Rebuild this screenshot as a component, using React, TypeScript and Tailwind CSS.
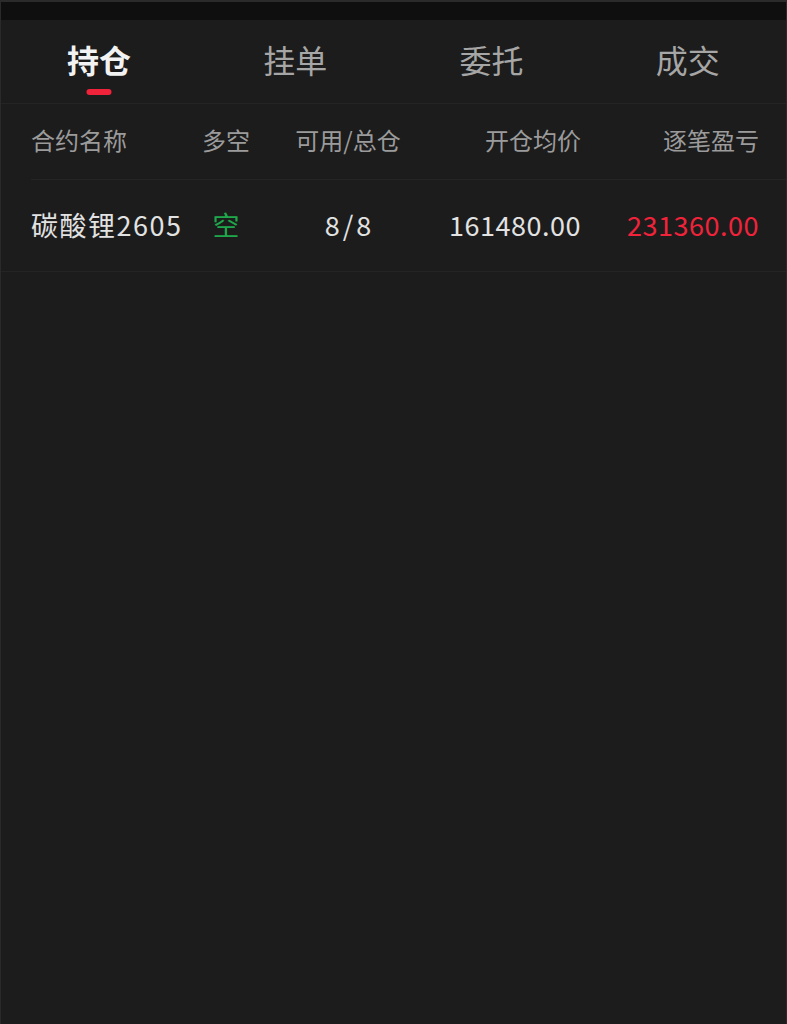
import React from "react";

const font = { fontFamily: '"Noto Sans CJK SC", "Noto Sans", sans-serif' };

export default function App() {
  const tabs = ["持仓", "挂单", "委托", "成交"];
  return (
    <div className="w-[787px] h-[1024px] bg-[#1c1c1c] flex flex-col border-x border-[#2a2a2a]" style={font}>
      <div className="h-[20px] bg-[#0f0f0f] border-t-2 border-[#2b2b2b]" />
      <div className="h-[84px] grid grid-cols-4 border-b border-[#242424]">
        {tabs.map((t, i) => (
          <div key={t} className="relative flex items-center justify-center">
            <span
              className={
                i === 0
                  ? "text-[32px] font-bold text-[#f2f2f2] leading-none -mt-[6px]"
                  : "text-[32px] text-[#a6a6a6] leading-none -mt-[6px]"
              }
            >
              {t}
            </span>
            {i === 0 && (
              <div className="absolute left-1/2 -translate-x-1/2 top-[69px] w-[25px] h-[6px] rounded-full bg-[#f0233b]" />
            )}
          </div>
        ))}
      </div>
      <div className="pl-[30px]">
        <div className="h-[76px] pb-[4px] grid grid-cols-[160px_70px_174px_146px_178px] items-center text-[24px] text-[#9b9b9b] border-b border-[#242424]">
          <div>合约名称</div>
          <div className="text-center">多空</div>
          <div className="text-center">可用/总仓</div>
          <div className="text-right">开仓均价</div>
          <div className="text-right">逐笔盈亏</div>
        </div>
      </div>
      <div className="h-[92px] pl-[30px] grid grid-cols-[160px_70px_174px_146px_178px] items-center text-[27px] text-[#e2e2e2] border-b border-[#242424]">
        <div className="whitespace-nowrap tracking-[1.5px]">碳酸锂2605</div>
        <div className="text-center text-[#1fa84b]">空</div>
        <div className="text-center tracking-[3px] pl-[3px]">8/8</div>
        <div className="text-right tracking-[0.5px]">161480.00</div>
        <div className="text-right tracking-[0.5px] text-[#f0233b]">231360.00</div>
      </div>
      <div className="flex-1" />
    </div>
  );
}
